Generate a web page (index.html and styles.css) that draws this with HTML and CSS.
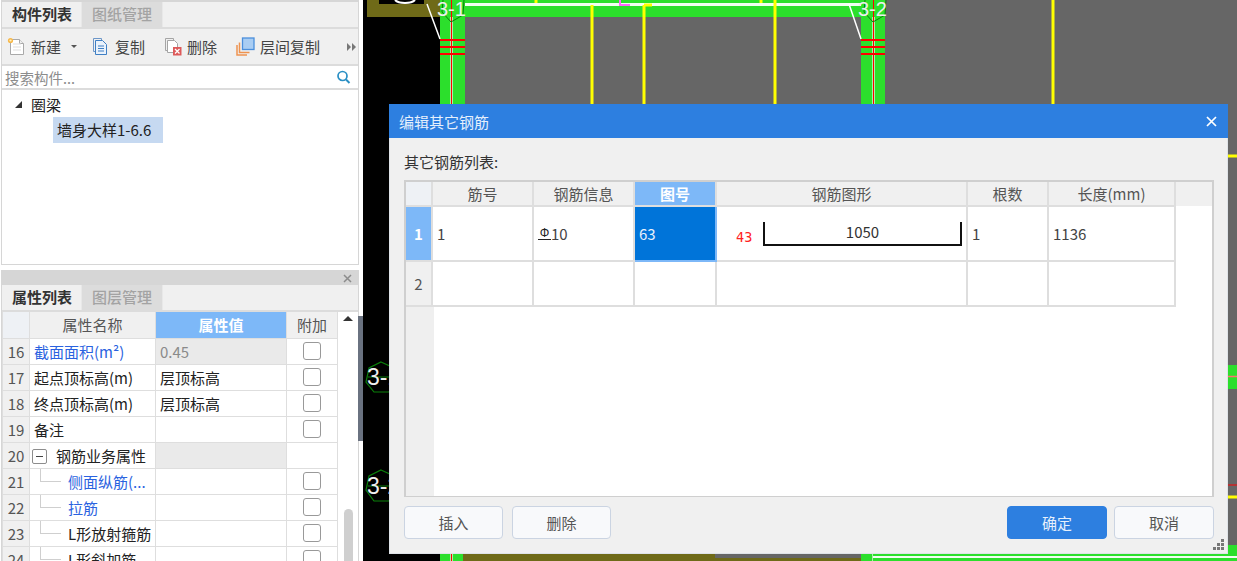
FILE: index.html
```html
<!DOCTYPE html>
<html lang="zh-CN">
<head>
    <meta charset="UTF-8">
    <title>编辑其它钢筋</title>
    <link rel="stylesheet" href="styles.css">
</head>
<body>
    <aside class="sidebar">
        <section class="panel panel-list">
            <div class="tabs">
                <div class="tab active">构件列表</div>
                <div class="tab">图纸管理</div>
            </div>
            <div class="toolbar">
                <div class="tool tool-new">
                    <svg width="19" height="19" viewBox="0 0 19 19"><path d="M3.5 2.5h9l4 4v11h-13z" fill="#fff" stroke="#a9a9a9"/><path d="M12.5 2.5v4h4" fill="#eee" stroke="#a9a9a9"/><path d="M6 7h8M6 10h8M6 13h8" stroke="#ddd"/><circle cx="3.5" cy="3.5" r="2.6" fill="#f7b84a"/><circle cx="3.5" cy="3.5" r="1.1" fill="#fff3c4"/></svg>
                    <span>新建</span>
                    <i class="caret"></i>
                </div>
                <div class="tool tool-copy">
                    <svg width="16" height="19" viewBox="0 0 16 19"><path d="M1.5 1.5h8v3" fill="none" stroke="#6d97c9"/><path d="M1.5 1.5v13h2" fill="none" stroke="#6d97c9"/><path d="M3.5 3.5h7l4 4v10h-11z" fill="#eaf2fb" stroke="#3f7fc4"/><path d="M6 9h6M6 11.5h6M6 14h6" stroke="#3f7fc4"/></svg>
                    <span>复制</span>
                </div>
                <div class="tool tool-del">
                    <svg width="18" height="19" viewBox="0 0 18 19"><path d="M1.5 1.5h8v3M1.5 1.5v12h2" fill="none" stroke="#a5a5a5"/><path d="M3.5 3.5h7l3 3v9h-10z" fill="#fff" stroke="#a5a5a5"/><rect x="9" y="10" width="8.5" height="8.5" fill="#dd5a5a"/><path d="M11 12l4.500 4.500M15.500 12L11 16.500" stroke="#fff" stroke-width="1.300"/></svg>
                    <span>删除</span>
                </div>
                <div class="tool tool-floor">
                    <svg width="19" height="19" viewBox="0 0 19 19"><path d="M1 8v10h10M3.500 5.500v10h10" fill="none" stroke="#ee9350" stroke-width="1.500"/><rect x="6.500" y="1" width="11.500" height="11.500" fill="#a9cdf3" stroke="#4b8fdc" stroke-width="1.300"/></svg>
                    <span>层间复制</span>
                </div>
                <div class="more">
                    <svg width="9" height="8" viewBox="0 0 9 8"><path d="M0 0l4 4-4 4zM5 0l4 4-4 4z" fill="#777"/></svg>
                </div>
            </div>
            <div class="search">
                <span>搜索构件...</span>
                <svg width="15" height="15" viewBox="0 0 15 15"><circle cx="6.500" cy="6" r="4.500" fill="none" stroke="#2a8fc4" stroke-width="1.700"/><path d="M10 9.500l3.500 3.500" stroke="#2a8fc4" stroke-width="2"/></svg>
            </div>
            <div class="tree">
                <div class="tree-root"><i class="tree-arrow"></i>圈梁</div>
                <div class="tree-leaf">墙身大样1-6.6</div>
            </div>
        </section>

        <section class="panel panel-props">
            <div class="panel-head">
                <svg width="9" height="9" viewBox="0 0 9 9"><path d="M1 1l7 7M8 1L1 8" stroke="#8c8c8c" stroke-width="1.500"/></svg>
            </div>
            <div class="tabs">
                <div class="tab active">属性列表</div>
                <div class="tab">图层管理</div>
            </div>
            <div class="props-body">
                <table class="props">
                    <thead>
                        <tr><th class="idx"></th><th class="name-col">属性名称</th><th class="val-col">属性值</th><th class="add-col">附加</th></tr>
                    </thead>
                    <tbody>
                        <tr><td class="idx">16</td><td class="link">截面面积(m²)</td><td class="locked">0.45</td><td class="add"><i class="check"></i></td></tr>
                        <tr><td class="idx">17</td><td>起点顶标高(m)</td><td>层顶标高</td><td class="add"><i class="check"></i></td></tr>
                        <tr><td class="idx">18</td><td>终点顶标高(m)</td><td>层顶标高</td><td class="add"><i class="check"></i></td></tr>
                        <tr><td class="idx">19</td><td>备注</td><td></td><td class="add"><i class="check"></i></td></tr>
                        <tr><td class="idx">20</td><td class="group"><i class="minus"></i>钢筋业务属性</td><td class="locked"></td><td></td></tr>
                        <tr><td class="idx">21</td><td class="child link"><i class="branch"></i>侧面纵筋(...</td><td></td><td class="add"><i class="check"></i></td></tr>
                        <tr><td class="idx">22</td><td class="child link"><i class="branch"></i>拉筋</td><td></td><td class="add"><i class="check"></i></td></tr>
                        <tr><td class="idx">23</td><td class="child"><i class="branch"></i>L形放射箍筋</td><td></td><td class="add"><i class="check"></i></td></tr>
                        <tr><td class="idx">24</td><td class="child"><i class="branch"></i>L形斜加筋</td><td></td><td class="add"><i class="check"></i></td></tr>
                    </tbody>
                </table>
                <div class="scroll">
                    <i class="scroll-up"></i>
                    <i class="scroll-thumb"></i>
                </div>
            </div>
        </section>
    </aside>

    <main class="canvas">
        <svg class="drawing" width="874" height="561" viewBox="363 0 874 561">
            <rect x="363" y="0" width="874" height="561" fill="#000"/>
            <rect x="465" y="0" width="772" height="556" fill="#666"/>
            <rect x="367" y="0" width="73" height="17" fill="#6f6a18"/>
            <rect x="379" y="0" width="45" height="4" fill="#000"/>
            <path d="M395 0a11 5 0 0 0 20 0" fill="none" stroke="#fff" stroke-width="2"/>
            <rect x="440" y="0" width="445" height="17" fill="#2cdf2c"/>
            <rect x="440" y="0" width="25" height="561" fill="#2cdf2c"/>
            <rect x="861" y="0" width="24" height="561" fill="#2cdf2c"/>
            <rect x="465" y="3" width="396" height="3" fill="#f2fff2"/>
            <path d="M451.500 17v544M873.500 17v544" stroke="#a8f0a8" stroke-width="3"/>
            <path d="M451.500 0v561M873.500 0v561" stroke="#f00"/>
            <path d="M440 40h25M440 47h25M440 54h25M861 40h24M861 47h24M861 54h24" stroke="#f00" stroke-width="2"/>
            <path d="M427 4l13 35M849 4l12 35" stroke="#fff" stroke-width="1.500"/>
            <path d="M536 0v3M761 0v3M592 5v100M644 5v100M775 0v105M1053 0v105" stroke="#ff0" stroke-width="3"/>
            <path d="M644 5h8" stroke="#ff0" stroke-width="3"/>
            <path d="M620 0v5h10" fill="none" stroke="#f6f" stroke-width="2"/>
            <path d="M443 0l-1 12 9 10 12-7 1-15M865 0l-1 12 9 10 12-7 1-15" fill="none" stroke="#0a800a"/>
            <text class="axis-sm" x="437" y="16">3-1</text>
            <text class="axis-sm" x="858" y="16">3-2</text>
            <path d="M1228 156h9M1228 497h9" stroke="#ff0" stroke-width="3"/>
            <rect x="1228" y="365" width="9" height="24" fill="#2cdf2c"/>
            <path d="M1228 376.500h9" stroke="#ff7070" stroke-width="1.500"/>
            <path d="M1228 485h9" stroke="#f00"/>
            <rect x="1228" y="545" width="9" height="16" fill="#2cdf2c"/>
            <rect x="463" y="554" width="398" height="7" fill="#6f6a18"/>
            <rect x="715" y="554" width="146" height="4" fill="#666"/>
            <rect x="873" y="554" width="364" height="7" fill="#2cdf2c"/>
            <rect x="873" y="556" width="364" height="2" fill="#f2fff2"/>
            <polygon points="381,362 394,368 398,382 389,392 374,392 366,382 369,368" fill="none" stroke="#0a800a" stroke-width="1.200"/>
            <polygon points="381,470 394,476 398,490 389,501 374,501 366,490 369,476" fill="none" stroke="#0a800a" stroke-width="1.200"/>
            <path d="M368 377h25M368 486h25" stroke="#0a800a"/>
            <text class="axis" x="367" y="385">3-1</text>
            <text class="axis" x="367" y="494">3-2</text>
        </svg>

        <div class="dialog">
            <div class="dialog-title">
                <span>编辑其它钢筋</span>
                <svg width="11" height="11" viewBox="0 0 11 11"><path d="M1 1l9 9M10 1l-9 9" stroke="#fff" stroke-width="1.700"/></svg>
            </div>
            <div class="dialog-body">
                <div class="list-label">其它钢筋列表:</div>
                <div class="rebar-frame">
                    <table class="rebars">
                        <thead>
                            <tr>
                                <th class="c-idx"></th>
                                <th class="c-no">筋号</th>
                                <th class="c-info">钢筋信息</th>
                                <th class="c-fig picked">图号</th>
                                <th class="c-shape">钢筋图形</th>
                                <th class="c-count">根数</th>
                                <th class="c-len">长度(mm)</th>
                                <th class="filler"></th>
                            </tr>
                        </thead>
                        <tbody>
                            <tr class="row-one">
                                <td class="row-no picked">1</td>
                                <td>1</td>
                                <td><span class="bar-grade">Φ</span>10</td>
                                <td class="selected">63</td>
                                <td>
                                    <div class="shape">
                                        <span class="hook">43</span>
                                        <div class="shape-line">1050</div>
                                    </div>
                                </td>
                                <td>1</td>
                                <td>1136</td>
                                <td class="filler"></td>
                            </tr>
                            <tr class="row-two">
                                <td class="row-no">2</td>
                                <td></td>
                                <td></td>
                                <td></td>
                                <td></td>
                                <td></td>
                                <td></td>
                                <td class="filler"></td>
                            </tr>
                        </tbody>
                    </table>
                </div>
                <div class="dialog-foot">
                    <button class="btn">插入</button>
                    <button class="btn">删除</button>
                    <span class="spacer"></span>
                    <button class="btn btn-end primary">确定</button>
                    <button class="btn btn-end">取消</button>
                </div>
            </div>
            <svg class="grip" width="11" height="11" viewBox="0 0 11 11"><path d="M8 0h3v3H8zM4 4h3v3H4zM8 4h3v3H8zM0 8h3v3H0zM4 8h3v3H4zM8 8h3v3H8z" fill="#777"/></svg>
        </div>
    </main>
</body>
</html>
```

FILE: styles.css
```css
:root {
    --blue: #2d7fe0;
    --pick: #7db8f8;
    --line: #dedede;
    --panel: #f0f0f0;
    --text: #333;
}

* {
    box-sizing: border-box;
}

html, body {
    height: 100%;
}

body {
    display: flex;
    width: 1237px;
    height: 561px;
    margin: 0;
    overflow: hidden;
    background: #fff;
    color: var(--text);
    font-family: "Noto Sans CJK SC", "Liberation Sans", sans-serif;
    font-size: 15px;
}

/* left column */
.sidebar {
    display: flex;
    flex-direction: column;
    gap: 5px;
    flex: 0 0 363px;
    width: 363px;
    padding: 0 4px 0 1px;
    background: #fff;
    position: relative;
}

.sidebar::after {
    content: '';
    position: absolute;
    right: 0;
    top: 316px;
    width: 5px;
    height: 125px;
    background: #6a7280;
}

.panel {
    border: 1px solid #d6d6d6;
    border-top-width: 2px;
    background: #fff;
}

.panel-list {
    flex: 0 0 265px;
}

.panel-props {
    flex: 1;
    min-height: 0;
    border-bottom: 0;
    overflow: hidden;
}

.panel-head {
    display: flex;
    justify-content: flex-end;
    align-items: center;
    height: 13px;
    padding-right: 6px;
    background: #d6d6d6;
}

.tabs {
    display: flex;
    height: 27px;
    background: var(--panel);
    border-bottom: 2px solid #dcdcdc;
}

.tab {
    width: 81px;
    padding-left: 10px;
    line-height: 24px;
    color: #a3a3a3;
    background: #dcdcdc;
    font-weight: 500;
    border-right: 1px solid #e8e8e8;
}

.tab.active {
    width: 80px;
    color: #333;
    background: var(--panel);
    font-weight: 700;
}

.toolbar {
    display: flex;
    align-items: center;
    height: 37px;
    padding-left: 5px;
    background: var(--panel);
    border-bottom: 2px solid #dcdcdc;
}

.tool {
    display: flex;
    align-items: center;
    gap: 5px;
    white-space: nowrap;
    color: #444;
}

.tool-copy {
    margin-left: 15px;
    gap: 7px;
}

.tool-del {
    margin-left: 19px;
    gap: 5px;
}

.tool-floor {
    margin-left: 19px;
    gap: 5px;
}

.caret {
    width: 0;
    height: 0;
    margin-left: 5px;
    border-left: 3px solid transparent;
    border-right: 3px solid transparent;
    border-top: 3px solid #555;
}

.more {
    display: flex;
    margin-left: auto;
    padding-right: 2px;
}

.search {
    display: flex;
    align-items: center;
    justify-content: space-between;
    height: 24px;
    padding: 1px 7px 0 3px;
    border-bottom: 2px solid #dcdcdc;
    color: #8c8c8c;
    font-size: 14.500px;
}

.tree {
    padding: 1px 0 0 13px;
}

.tree-root {
    display: flex;
    align-items: center;
    height: 26px;
    color: #222;
}

.tree-arrow {
    width: 0;
    height: 0;
    margin-right: 9px;
    border-left: 7px solid transparent;
    border-bottom: 7px solid #333;
}

.tree-leaf {
    width: 110px;
    height: 26px;
    margin-left: 38px;
    padding-left: 4px;
    line-height: 26px;
    background: #c6d9f1;
    color: #222;
}

/* property grid */
.props-body {
    display: flex;
    align-items: flex-start;
}

.props {
    flex: 0 0 336px;
    width: 336px;
    table-layout: fixed;
    border-collapse: collapse;
}

.props th {
    height: 26px;
    padding: 0;
    background: var(--panel);
    border: 1px solid var(--line);
    border-top: 0;
    color: #555;
    font-weight: 400;
}

.props th.idx {
    width: 27px;
    background: #eef1f5;
}

.props th.val-col {
    width: 131px;
    background: var(--pick);
    color: #fff;
    font-weight: 700;
}

.props th.name-col {
    width: 126px;
}

.props td {
    height: 26px;
    padding: 0 0 0 4px;
    border: 1px solid var(--line);
    color: #222;
    white-space: nowrap;
    overflow: hidden;
}

.props td.idx {
    padding: 0;
    background: var(--panel);
    text-align: center;
    color: #555;
}

.props td.link {
    color: #2a62e0;
}

.props td.locked {
    background: #eaeaea;
    color: #8a8a8a;
}

.props td.add {
    padding: 0;
    text-align: center;
}

.check {
    display: block;
    width: 18px;
    height: 18px;
    margin: 0 auto;
    background: #fff;
    border: 1px solid #999;
    border-radius: 3px;
}

.minus {
    display: inline-block;
    position: relative;
    width: 15px;
    height: 15px;
    margin-right: 9px;
    vertical-align: -2px;
    border: 1px solid #8d8d8d;
    border-radius: 2px;
}

.minus::after {
    content: '';
    position: absolute;
    left: 3px;
    top: 6px;
    width: 7px;
    height: 1px;
    background: #444;
}

.props td.group {
    padding-left: 2px;
}

.props td.child {
    padding-left: 38px;
    position: relative;
}

.branch {
    position: absolute;
    left: 10px;
    top: -1px;
    width: 21px;
    height: 14px;
    border-left: 1px solid #cfcfcf;
    border-bottom: 1px solid #cfcfcf;
}

.scroll {
    position: relative;
    flex: 1;
    height: 300px;
    border-left: 0;
}

.scroll-up {
    position: absolute;
    left: 5px;
    top: 4px;
    width: 0;
    height: 0;
    border-left: 5px solid transparent;
    border-right: 5px solid transparent;
    border-bottom: 5px solid #333;
}

.scroll-thumb {
    position: absolute;
    left: 6px;
    top: 197px;
    width: 9px;
    height: 100px;
    border-radius: 5px;
    background: #cfcfcf;
}

/* drawing area + dialog */
.canvas {
    position: relative;
    flex: 1;
    background: #000;
}

.drawing {
    display: block;
}

.axis,
.axis-sm {
    font-family: "Liberation Sans", sans-serif;
    fill: #eee;
}

.axis {
    font-size: 23px;
}

.axis-sm {
    font-size: 20px;
}

.dialog {
    position: absolute;
    left: 26px;
    top: 104px;
    display: flex;
    flex-direction: column;
    width: 839px;
    height: 450px;
    background: var(--panel);
    border: 1px solid #dfe3e8;
    border-top: 0;
}

.dialog-title {
    display: flex;
    align-items: center;
    justify-content: space-between;
    height: 34px;
    margin: 0 -1px;
    padding: 0 11px 0 10px;
    background: var(--blue);
    color: #e6f0fc;
}

.dialog-body {
    display: flex;
    flex: 1;
    flex-direction: column;
    padding: 0 13px 14px 14px;
}

.list-label {
    height: 42px;
    padding-top: 14px;
    line-height: 20px;
    color: #333;
}

.rebar-frame {
    flex: 1;
    border: 2px solid #cfcfcf;
    border-bottom-width: 1px;
    background: linear-gradient(to right, #efefef 28px, #fff 28px);
    overflow: hidden;
}

.rebars {
    width: 100%;
    table-layout: fixed;
    border-collapse: collapse;
}

.rebars th {
    height: 24px;
    padding: 0;
    background: var(--panel);
    border: 2px solid var(--line);
    border-top: 0;
    color: #555;
    font-weight: 400;
}

.rebars td {
    padding: 0 0 0 4px;
    background: #fff;
    border: 2px solid var(--line);
    color: #444;
}

.c-idx { width: 26px; }
.c-no { width: 101px; }
.c-info { width: 101px; }
.c-fig { width: 82px; }
.c-shape { width: 251px; }
.c-count { width: 81px; }
.c-len { width: 127px; }

.rebars th.c-idx {
    background: #eef1f5;
    border-left: 0;
}

.rebars th.filler,
.rebars td.filler {
    border: 0;
    border-left: 2px solid var(--line);
}

.rebars td.filler {
    background: #fff;
}

.rebars th.filler {
    background: var(--panel);
}

.rebars th.picked {
    background: var(--pick);
    color: #fff;
    font-weight: 700;
}

.row-one td {
    height: 55px;
}

.row-two td {
    height: 45px;
}

.rebars td.row-no {
    padding: 0;
    text-align: center;
    background: var(--panel);
    border-left: 0;
    color: #555;
}

.rebars td.row-no.picked {
    background: var(--pick);
    color: #fff;
    font-weight: 700;
}

.rebars td.selected {
    background: #0074d9;
    border: 2px solid var(--pick);
    color: #e6f0fc;
}

.bar-grade {
    display: inline-block;
    width: 13px;
    font-family: "Liberation Sans", sans-serif;
    font-size: 12px;
    line-height: 11px;
    vertical-align: 3px;
    border-bottom: 1px solid #222;
    color: #222;
    text-align: center;
}

.shape {
    display: flex;
    align-items: flex-end;
    height: 24px;
    padding-left: 15px;
}

.hook {
    width: 27px;
    font-family: "DejaVu Sans Mono", monospace;
    font-size: 13.500px;
    line-height: 18px;
    color: #f22;
}

.shape-line {
    width: 199px;
    height: 24px;
    border: 2px solid #111;
    border-top: 0;
    line-height: 20px;
    text-align: center;
    color: #333;
}

.dialog-foot {
    display: flex;
    gap: 9px;
    margin-top: 9px;
}

.spacer {
    flex: 1;
}

.btn {
    width: 99px;
    height: 33px;
    padding: 0;
    background: #f8f9fb;
    border: 1px solid #cbd4e2;
    border-radius: 4px;
    color: #555;
    font: inherit;
}

.btn-end {
    width: 100px;
}

.btn.primary {
    margin-right: -2px;
    background: var(--blue);
    border-color: var(--blue);
    color: #e6f0fc;
}

.grip {
    position: absolute;
    right: 3px;
    bottom: 3px;
}
```
